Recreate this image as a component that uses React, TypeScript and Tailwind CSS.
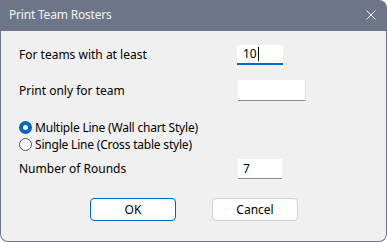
import React, { useState } from "react";

const font = { fontFamily: '"Noto Sans", "Segoe UI", sans-serif' };

export default function App() {
  const [team, setTeam] = useState("");
  const [rounds, setRounds] = useState("7");
  const [style, setStyle] = useState<"multi" | "single">("multi");

  return (
    <div
      className="w-[387px] h-[242px] bg-[#6d7689] rounded-tr-[8px] rounded-b-[8px] flex flex-col text-[12px] text-black"
      style={font}
    >
      {/* Title bar */}
      <div className="h-[31px] flex items-center justify-between pl-[9px] pr-[11px]">
        <span className="text-[#f3f3f3] text-[12px] leading-none -mt-[1px] tracking-[-0.2px]">
          Print Team Rosters
        </span>
        <svg width="10" height="10" viewBox="0 0 10 10" className="-mt-[1px]">
          <path d="M0.5 0.5 L9.5 9.5 M9.5 0.5 L0.5 9.5" stroke="#f3f3f3" strokeWidth="1" />
        </svg>
      </div>

      {/* Body */}
      <div className="flex-1 mx-[1px] mb-[1px] bg-[#f0f0f0] rounded-b-[7px] flex flex-col pl-[18px] pt-[14px]">
        <div className="flex items-center h-[20px]">
          <span className="w-[218px]">For teams with at least</span>
          {/* focused field */}
          <div className="w-[46px] h-[20px] bg-white border-b-2 border-[#0067c0] flex items-center pl-[6px]">
            <span>10</span>
            <span className="w-[1px] h-[14px] bg-black ml-[1px]" />
          </div>
        </div>

        <div className="flex items-center h-[21px] mt-[15px]">
          <span className="w-[219px]">Print only for team</span>
          <input
            value={team}
            onChange={(e) => setTeam(e.target.value)}
            className="w-[68px] h-[21px] bg-white border-b border-r border-[#8c8c8c] border-r-[#e3e3e3] outline-none px-[6px]"
            style={font}
          />
        </div>

        <div className="flex flex-col mt-[18px] tracking-[-0.2px]">
          <label className="flex items-center h-[17px] gap-[3px]" onClick={() => setStyle("multi")}>
            <span
              className={`w-[13px] h-[13px] rounded-full flex items-center justify-center ${
                style === "multi" ? "bg-[#0067c0]" : "border border-[#5a5a5a] bg-[#f7f7f7]"
              }`}
            >
              {style === "multi" && <span className="w-[5px] h-[5px] rounded-full bg-white" />}
            </span>
            <span>Multiple Line (Wall chart Style)</span>
          </label>
          <label className="flex items-center h-[17px] gap-[3px]" onClick={() => setStyle("single")}>
            <span
              className={`w-[13px] h-[13px] rounded-full flex items-center justify-center ${
                style === "single" ? "bg-[#0067c0]" : "border border-[#5a5a5a] bg-[#f7f7f7]"
              }`}
            >
              {style === "single" && <span className="w-[5px] h-[5px] rounded-full bg-white" />}
            </span>
            <span>Single Line (Cross table style)</span>
          </label>
        </div>

        <div className="flex items-center h-[20px] mt-[6px]">
          <span className="w-[219px]">Number of Rounds</span>
          <input
            value={rounds}
            onChange={(e) => setRounds(e.target.value)}
            className="w-[44px] h-[20px] bg-white border-b border-[#8c8c8c] outline-none px-[5px]"
            style={font}
          />
        </div>

        <div className="flex mt-[19px] pl-[71px] gap-[36px]">
          <button className="w-[86px] h-[23px] bg-[#fdfdfd] border border-[#0067c0] rounded-[4px] text-[12px]">
            OK
          </button>
          <button className="w-[86px] h-[23px] bg-[#fdfdfd] border border-[#d0d0d0] rounded-[4px] text-[12px]">
            Cancel
          </button>
        </div>
      </div>
    </div>
  );
}
